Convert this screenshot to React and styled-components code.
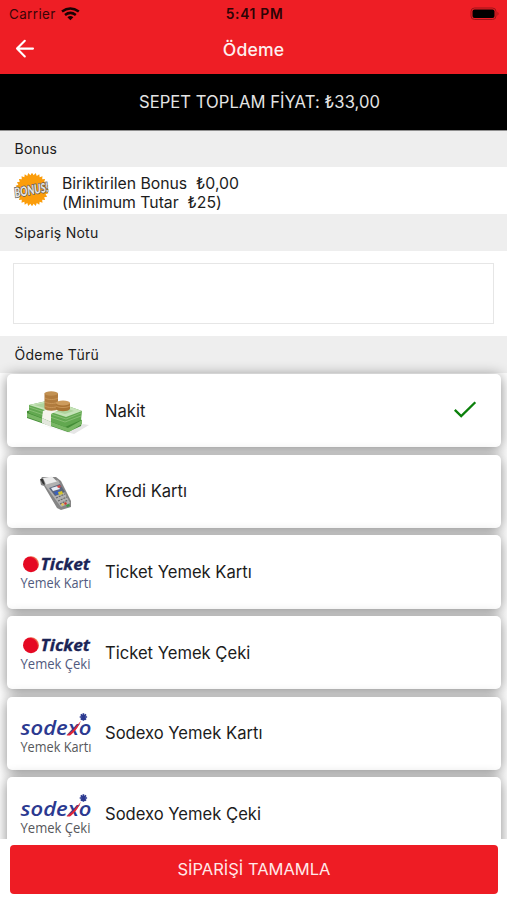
import React from "react";
import styled, { createGlobalStyle } from "styled-components";

const GlobalStyle = createGlobalStyle`
  * { box-sizing: border-box; }
  body {
    margin: 0;
    background: #fff;
    font-family: Inter, "Liberation Sans", sans-serif;
    color: #1c1c1c;
  }
`;

const Screen = styled.div`
  width: 507px;
  height: 900px;
  display: flex;
  flex-direction: column;
  overflow: hidden;
  background: #fff;
`;

const Header = styled.header`
  flex: none;
  height: 74px;
  background: #ee1e25;
`;

const StatusBar = styled.div`
  height: 27px;
  display: grid;
  grid-template-columns: 1fr auto 1fr;
  align-items: center;
  padding: 0 7px 0 9px;
  font-size: 13.4px;
  color: #3a0507;
`;

const Carrier = styled.div`
  display: flex;
  align-items: center;
  gap: 5px;
  letter-spacing: 0.4px;
`;

const Clock = styled.div`
  font-weight: 600;
  font-size: 13.8px;
  letter-spacing: 0.7px;
  color: #2c0405;
`;

const BatteryIcon = styled.svg`
  justify-self: end;
`;

const NavBar = styled.div`
  height: 44px;
  display: grid;
  grid-template-columns: 40px 1fr 40px;
  align-items: center;
  padding: 0 12px 0 13px;
  color: #fff;

  svg {
    margin-top: -2px;
  }
`;

const NavTitle = styled.h1`
  margin: 0;
  padding-right: 1px;
  text-align: center;
  font-size: 17.6px;
  font-weight: 500;
  letter-spacing: 0.15px;
  opacity: 0.93;
`;

const TotalBar = styled.div`
  flex: none;
  height: 57px;
  display: flex;
  align-items: center;
  justify-content: center;
  padding-left: 12px;
  background: #000;
  border-bottom: 1px solid #8f8f8f;
  color: #e4e4e4;
  font-size: 16.6px;
  letter-spacing: 0.05px;
`;

const SectionTitle = styled.h2`
  flex: none;
  height: ${(p) => p.$height}px;
  margin: 0;
  padding: 0 0 1px 14.5px;
  display: flex;
  align-items: center;
  background: #eee;
  font-size: 14px;
  font-weight: 400;
  letter-spacing: 0.25px;
`;

const BonusRow = styled.div`
  flex: none;
  height: 47px;
  display: flex;
  align-items: flex-start;
  gap: 9px;
  padding: 4px 0 0 13px;
`;

const BonusText = styled.div`
  padding-top: 3px;
  font-size: 15.8px;
  line-height: 19px;
  white-space: pre;
  letter-spacing: -0.02px;
`;

const NoteArea = styled.div`
  flex: none;
  height: 85px;
  padding: 12px 13px;
`;

const NoteInput = styled.textarea`
  display: block;
  width: 481px;
  height: 61px;
  border: 1px solid #e6e6e6;
  border-radius: 0;
  resize: none;
  outline: none;
  background: #fff;
`;

const PaymentList = styled.div`
  flex: none;
  height: 503px;
  margin-top: -37px;
  padding: 38px 6.5px 0 7px;
  overflow: hidden;
  display: flex;
  flex-direction: column;
  gap: 7.5px;
`;

const PaymentCard = styled.div`
  flex: none;
  height: 73.2px;
  display: flex;
  align-items: center;
  padding-right: 24px;
  background: #fff;
  border-radius: 5px;
  box-shadow: 0 2px 14px rgba(0, 0, 0, 0.48);
`;

const Logo = styled.div`
  width: 98px;
  height: 73px;
  flex: none;
`;

const PaymentName = styled.div`
  flex: 1;
  padding-bottom: 0.2px;
  font-size: 16.6px;
`;

const Footer = styled.footer`
  flex: none;
  padding: 6px 9px 0 10px;
`;

const SubmitButton = styled.button`
  display: block;
  width: 100%;
  height: 49px;
  padding: 0 0 2px;
  border: 0;
  border-radius: 4px;
  background: #ee1c24;
  color: #ffe9e9;
  font-family: inherit;
  font-size: 16.5px;
`;

const WifiIcon = () => (
  <svg width="19" height="14" viewBox="0 0 19 14" fill="none" stroke="#1a0203" strokeWidth="2.5">
    <path d="M1 4.6Q9.3-1.6 17.8 4.6" />
    <path d="M4 8Q9.4 3.7 14.8 8" />
    <path d="M6.4 10.2Q9.4 8 12.4 10.2L9.4 13.2Z" fill="#1a0203" stroke="none" />
  </svg>
);

const BackArrow = () => (
  <svg width="24" height="24" viewBox="0 0 24 24" fill="none" stroke="#fff" strokeWidth="2.1" strokeLinecap="round" strokeLinejoin="round">
    <path d="M20 12.6H4M11.8 4.8 4 12.6l7.8 7.8" />
  </svg>
);

const BURST = Array.from({ length: 56 }, (_, i) => {
  const r = i % 2 ? 14.4 : 16.8;
  const a = (i * Math.PI) / 28;
  return `${(19 + r * Math.cos(a)).toFixed(2)},${(18.5 + r * Math.sin(a)).toFixed(2)}`;
}).join(" ");

const BonusBadge = () => (
  <svg width="40" height="40" viewBox="0 0 40 40">
    <polygon points={BURST} fill="#fb9d0b" />
    <g transform="translate(2 26.5) rotate(-10) skewX(-4)">
      <text x="0" y="0" textLength="34" lengthAdjust="spacingAndGlyphs" fontFamily="Lato, sans-serif" fontWeight="900" fontSize="13" fill="#e6e6e6" stroke="#5b5650" strokeWidth="1.5" paintOrder="stroke">BONUS!</text>
    </g>
  </svg>
);

const Cash = () => (
  <svg width="98" height="73" viewBox="0 0 98 73">
    <path d="M30 50 62 58l14-8 6 1-15 9Z" fill="#e6e6e6" />
    <path d="m20 37 19-4 36 13-1 6-13 6-41-14Z" fill="#438c36" />
    <path d="m20 39 41 15 14-8v4l-13 8-42-15Z" fill="#79b765" />
    <path d="m22 31 22-5 31 11-1 9-16 7-36-14Z" fill="#62a850" />
    <path d="m22 31 22-5 31 11-16 6Z" fill="#c6e3b8" />
    <path d="m27 31 16-3 24 9-9 3Z" fill="#aed49d" />
    <path d="m22 33 37 12 15-6M22 36l36 12 16-6" fill="none" stroke="#8fc47b" strokeWidth=".8" />
    <path d="m36 37 16-7 7 2-15 8v8l-9-4Z" fill="#f4f4ec" />
    <path d="m35 44 9 4v5l-9-4Z" fill="#e3e7dd" />
    <path d="M37.5 19.5v15c2 3 12 3 13.5 0v-15Z" fill="#b17c3e" />
    <path d="M38 24c3 2 10 2 13 0M38 28c3 2 10 2 13 0M38 32c3 2 10 2 13 0" fill="none" stroke="#cf9d60" strokeWidth=".8" />
    <ellipse cx="44.2" cy="19.5" rx="6.8" ry="2.2" fill="#c29152" />
    <path d="M49 29v6c2 3 12 3 14 0v-6Z" fill="#aa7434" />
    <path d="M49 32c3 2 11 2 14 0" fill="none" stroke="#cf9d60" strokeWidth=".8" />
    <ellipse cx="56" cy="29" rx="7" ry="2.4" fill="#cd9c5d" />
  </svg>
);

const CardTerminal = () => (
  <svg width="98" height="73" viewBox="0 0 98 73">
    <path d="m33 25 2-3 14 0 5 4 10 20v6l-10 3-4-2-13-22-3-1Z" fill="#858585" />
    <path d="m37 29 14-4 12 23-9 4Z" fill="#b1b1b1" />
    <path d="m33 24 3 5 2 1-2-6Z" fill="#343434" />
    <path d="M36 23 45 21.5l5 5-11 3Z" fill="#ececec" />
    <path d="m42 33 11-4 5 8-10 4Z" fill="#5a657b" />
    <path d="m44 33 7-2 2 3-7 2Z" fill="#e8edf6" />
    <path d="m50 31 3-1 1 2-3 1Z" fill="#d94a48" />
    <path d="m47 37 6-2 2 3-6 2Z" fill="#3b61bd" />
    <path d="m51 37 4-1 1 3-4 1Z" fill="#d4c42b" />
    <path d="m49 43 9-4M51 46l9-4M53 49l8-4" stroke="#666" strokeWidth="1.2" strokeDasharray="2 1" />
    <path d="m54 49 2-1 1 2-2 1Z" fill="#e6c54f" />
    <path d="m57 48 2-1 1 2-2 1Z" fill="#cf3b33" />
    <path d="m59 50 3-1 1 2-3 1Z" fill="#3d9a45" />
  </svg>
);

const Caption = ({ children, fill, width, y }) => (
  <text x="13.5" y={y} textLength={width} lengthAdjust="spacingAndGlyphs" fontFamily="'Open Sans', 'Noto Sans', sans-serif" fontWeight="500" fontSize="14" fill={fill}>{children}</text>
);

const TicketLogo = ({ caption, width }) => (
  <svg width="98" height="73" viewBox="0 0 98 73">
    <defs>
      <radialGradient id="ticketDot" cx=".36" cy=".6" r=".67">
        <stop offset=".8" stopColor="#e50923" />
        <stop offset="1" stopColor="#f5a06a" />
      </radialGradient>
    </defs>
    <circle cx="24" cy="29.2" r="8" fill="url(#ticketDot)" />
    <text x="33.5" y="35.3" textLength="49.5" lengthAdjust="spacingAndGlyphs" fontFamily="'Open Sans', 'Noto Sans', sans-serif" fontWeight="700" fontStyle="italic" fontSize="16.5" fill="#1b2456" stroke="#1b2456" strokeWidth=".3">Ticket</text>
    <Caption y="52.7" fill="#515a7e" width={width}>{caption}</Caption>
  </svg>
);

const SodexoLogo = ({ caption, width }) => (
  <svg width="98" height="73" viewBox="0 0 98 73">
    <text x="13.5" y="37.7" textLength="71" lengthAdjust="spacingAndGlyphs" fontFamily="'Open Sans', 'Noto Sans', sans-serif" fontWeight="600" fontStyle="italic" fontSize="20.5" fill="#2b3990">sodexo</text>
    <path d="M59.5 38.6c5.500-4 8.500-7.500 14.500-14.800-3 7-6.500 11.500-11 14.800Z" fill="#e32636" />
    <path d="M76.4 16.3v7.4M72.7 20h7.4M73.8 17.4l5.2 5.2M79 17.4l-5.2 5.2" stroke="#2b3990" strokeWidth="1.7" />
    <Caption y="54.5" fill="#56575b" width={width}>{caption}</Caption>
  </svg>
);

const CheckIcon = () => (
  <svg width="24" height="24" viewBox="0 0 24 24" fill="none" stroke="#0b800b" strokeWidth="2.3">
    <path d="m1.8 10.9 6.4 6.2L22.3 3.2" />
  </svg>
);

const METHODS = [
  { name: "Nakit", logo: <Cash />, selected: true },
  { name: "Kredi Kartı", logo: <CardTerminal /> },
  { name: "Ticket Yemek Kartı", logo: <TicketLogo caption="Yemek Kartı" width={71} /> },
  { name: "Ticket Yemek Çeki", logo: <TicketLogo caption="Yemek Çeki" width={70} /> },
  { name: "Sodexo Yemek Kartı", logo: <SodexoLogo caption="Yemek Kartı" width={71} /> },
  { name: "Sodexo Yemek Çeki", logo: <SodexoLogo caption="Yemek Çeki" width={70} /> },
];

export default function App() {
  return (
    <Screen>
      <GlobalStyle />
      <Header>
        <StatusBar>
          <Carrier>Carrier <WifiIcon /></Carrier>
          <Clock>5:41 PM</Clock>
          <BatteryIcon width="30" height="14" viewBox="0 0 30 14">
            <rect x="1" y="1" width="25" height="11.5" rx="3.5" fill="none" stroke="#9c1419" />
            <rect x="2.5" y="2.5" width="22" height="8.5" rx="2" fill="#000" />
            <path d="M27.5 4.8q2 2 0 4Z" fill="#9c1419" />
          </BatteryIcon>
        </StatusBar>
        <NavBar>
          <BackArrow />
          <NavTitle>Ödeme</NavTitle>
        </NavBar>
      </Header>
      <TotalBar>SEPET TOPLAM FİYAT: ₺33,00</TotalBar>
      <SectionTitle $height={36}>Bonus</SectionTitle>
      <BonusRow>
        <BonusBadge />
        <BonusText>{"Biriktirilen Bonus  ₺0,00\n(Minimum Tutar  ₺25)"}</BonusText>
      </BonusRow>
      <SectionTitle $height={37}>Sipariş Notu</SectionTitle>
      <NoteArea>
        <NoteInput aria-label="Sipariş Notu" />
      </NoteArea>
      <SectionTitle $height={37}>Ödeme Türü</SectionTitle>
      <PaymentList>
        {METHODS.map((m) => (
          <PaymentCard key={m.name}>
            <Logo>{m.logo}</Logo>
            <PaymentName>{m.name}</PaymentName>
            {m.selected && <CheckIcon />}
          </PaymentCard>
        ))}
      </PaymentList>
      <Footer>
        <SubmitButton>SİPARİŞİ TAMAMLA</SubmitButton>
      </Footer>
    </Screen>
  );
}
